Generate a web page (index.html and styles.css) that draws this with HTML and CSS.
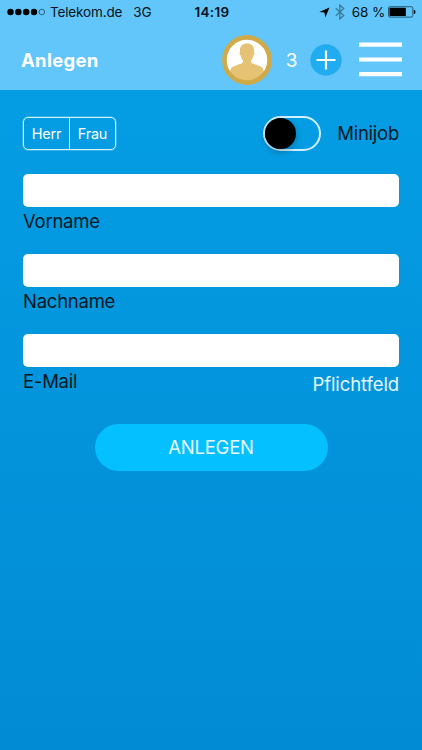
FILE: index.html
```html
<!DOCTYPE html>
<html lang="de">

<head>
    <meta charset="utf-8">
    <meta name="viewport" content="width=device-width, initial-scale=1">
    <title>Anlegen</title>
    <link rel="stylesheet" href="styles.css">
</head>

<body>
    <header class="header">
        <div class="status">
            <div class="carrier">
                <svg class="signal" width="39" height="8" viewBox="0 0 39 8">
                    <circle cx="3.5" cy="4" r="3.2" />
                    <circle cx="11.4" cy="4" r="3.2" />
                    <circle cx="19.2" cy="4" r="3.2" />
                    <circle cx="27" cy="4" r="3.2" />
                    <circle cx="34.8" cy="4" r="2.8" fill="none" stroke="#163b50" stroke-width=".7" />
                </svg>
                <span class="provider">Telekom.de</span>
                <span class="network">3G</span>
            </div>
            <span class="time">14:19</span>
            <div class="indicators">
                <svg class="location" width="11" height="11" viewBox="0 0 11 11">
                    <path d="M10.5 .4L6.3 10.4L5.5 5.6L.4 4.9Z" />
                </svg>
                <svg class="bluetooth" width="10" height="16" viewBox="0 0 10 16">
                    <path d="M.8 4.3L8.7 11.5L4.8 15V1L8.7 4.5L.8 11.7" fill="none" stroke="#3b7898" stroke-width="1.3" />
                </svg>
                <span class="percent">68 %</span>
                <svg class="battery" width="28" height="12" viewBox="0 0 28 12">
                    <rect x=".5" y=".7" width="24.3" height="10.4" rx="1.5" fill="none" stroke="#173b50" stroke-width=".8" />
                    <rect x="1.5" y="1.7" width="16.3" height="8.4" rx=".5" />
                    <path d="M25.8 3.8Q27.5 4.2 27.5 5.9T25.8 8Z" />
                </svg>
            </div>
        </div>
        <nav class="nav">
            <h1>Anlegen</h1>
            <svg class="avatar" width="50" height="50" viewBox="0 0 50 50">
                <circle cx="25" cy="25" r="22" fill="#fff" />
                <path d="M8 38C8.2 33.5 9.6 31.8 13.2 30.7L18.6 28.8C20.4 28.1 21.2 27.2 21 25.4C19.6 23.9 18.9 22.4 18.7 20.6C17.4 19.8 17.3 17.8 18 16.8C17.5 11.4 20.3 8.5 25 8.5S32.5 11.4 32 16.8C32.7 17.8 32.6 19.8 31.3 20.6C31.1 22.4 30.4 23.9 29 25.4C28.8 27.2 29.6 28.1 31.4 28.8L36.8 30.7C40.4 31.8 41.8 33.5 42 38A21.5 21.5 0 0 1 8 38Z" fill="#e5c274" />
                <circle cx="25" cy="25" r="22.6" fill="none" stroke="#d0aa49" stroke-width="4.6" />
            </svg>
            <span class="count">3</span>
            <button type="button" class="add" aria-label="Hinzufügen">
                <svg width="32" height="32" viewBox="0 0 32 32">
                    <circle cx="16" cy="16" r="15.7" fill="#20acee" />
                    <path d="M6.5 16H25.5M16 6.5V25.5" stroke="#fff" stroke-width="2.2" />
                </svg>
            </button>
            <button type="button" class="menu" aria-label="Menü">
                <svg width="43" height="35" viewBox="0 0 43 35">
                    <path d="M0 2.7H43M0 17.5H43M0 32.2H43" stroke="#fff" stroke-width="4.2" />
                </svg>
            </button>
        </nav>
    </header>
    <form class="main">
        <div class="options">
            <div class="segment">
                <button type="button">Herr</button>
                <button type="button">Frau</button>
            </div>
            <div class="minijob">
                <span class="switch"><span class="knob"></span></span>
                <span>Minijob</span>
            </div>
        </div>
        <div class="field">
            <input type="text" id="vorname">
            <label for="vorname">Vorname</label>
        </div>
        <div class="field">
            <input type="text" id="nachname">
            <label for="nachname">Nachname</label>
        </div>
        <div class="field">
            <input type="email" id="email">
            <div class="row">
                <label for="email">E-Mail</label>
                <span class="required">Pflichtfeld</span>
            </div>
        </div>
        <button type="button" class="submit">ANLEGEN</button>
    </form>
</body>

</html>
```

FILE: styles.css
```css
* {
    box-sizing: border-box;
}

body {
    margin: 0;
    min-height: 750px;
    background: linear-gradient(#049de3 90px, #028bd5 750px);
    font-family: Inter, "Liberation Sans", sans-serif;
    font-size: 18.5px;
    letter-spacing: -.25px;
    color: #061722;
}

button {
    padding: 0;
    border: 0;
    background: none;
    color: #fff;
    font-family: inherit;
    letter-spacing: inherit;
}

svg {
    display: block;
}

.header {
    height: 90px;
    background: #62c6fa;
}

.status {
    display: grid;
    grid-template-columns: 1fr auto 1fr;
    align-items: center;
    height: 24px;
    padding: 0 6px 0 7px;
    color: #04121b;
    font-size: 13.5px;
    letter-spacing: -.15px;
}

.carrier,
.indicators {
    display: flex;
    align-items: center;
}

.provider {
    margin-left: 4px;
}

.network {
    margin-left: 11px;
}

.time {
    padding-left: 1px;
    font-weight: 600;
    letter-spacing: .3px;
}

.indicators {
    justify-content: flex-end;
}

.location {
    margin-right: 5px;
}

.bluetooth {
    margin-right: 7px;
}

.battery {
    margin-left: 3px;
}

.nav {
    display: flex;
    align-items: center;
    height: 71px;
    padding: 0 20px 0 21px;
}

h1 {
    margin: 0 auto 0 0;
    color: #fff;
    font-size: 18.5px;
    font-weight: 700;
    letter-spacing: .3px;
}

.count {
    width: 38px;
    padding: 1px 0 0 1px;
    color: #fff;
    font-size: 19px;
    text-align: center;
}

.menu {
    margin-left: 17px;
}

.main {
    padding: 25px 23px 0;
}

.options {
    display: flex;
    justify-content: space-between;
    height: 58.5px;
}

.segment {
    display: flex;
    width: 93px;
    height: 33px;
    margin-top: 2px;
    border: 1px solid #d8f3ff;
    border-radius: 5px;
    box-shadow: 0 0 0 .5px rgba(201, 239, 255, .5);
}

.segment button {
    flex: 1;
    font-size: 14.5px;
}

.segment button + button {
    border-left: 1px solid #d8f3ff;
}

.minijob {
    display: flex;
    align-items: center;
    gap: 16px;
    height: 36px;
}

.switch {
    width: 58px;
    height: 35px;
    border: 2px solid #d0efff;
    border-radius: 18px;
}

.knob {
    display: block;
    width: 31px;
    height: 31px;
    border-radius: 50%;
    background: #000;
    box-shadow: 0 3px 6px rgba(0, 0, 0, .25);
}

.field {
    height: 80.3px;
}

input {
    display: block;
    width: 100%;
    height: 33px;
    padding: 0 8px;
    border: 0;
    border-radius: 5px;
    background: #fff;
    font: inherit;
}

label {
    display: block;
    line-height: 28px;
}

.row {
    display: flex;
    justify-content: space-between;
}

.required {
    padding-top: 3px;
    color: #e2f7ff;
    letter-spacing: -.1px;
    line-height: 28px;
}

.submit {
    display: block;
    width: 233px;
    height: 47px;
    margin: 9.6px auto 0;
    border-radius: 24px;
    background: #05c0ff;
    color: #e8faff;
    font-size: 18.5px;
}
```
